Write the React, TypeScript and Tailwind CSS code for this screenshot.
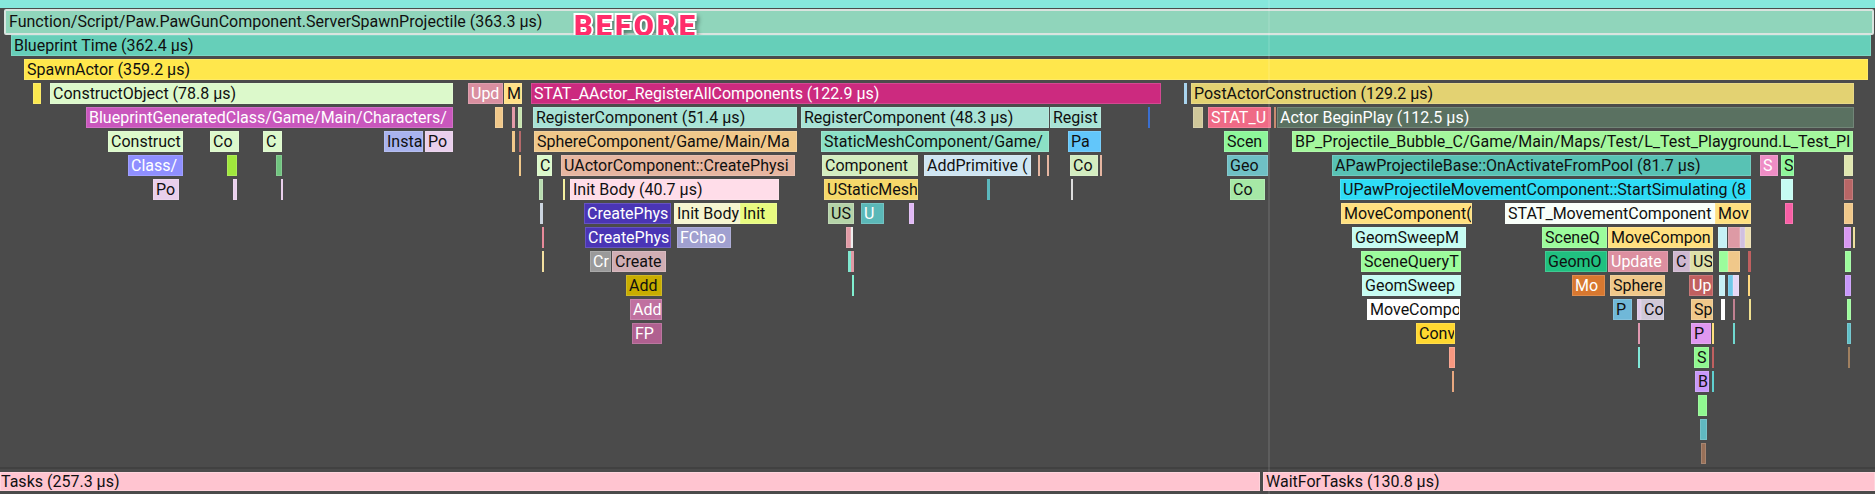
import React from "react";

type Bar = [number, number, string, string?, number?];

const R: Bar[][] = [
  [[33,41,"#fbe84f"],[50,453,"#dcf9cb","ConstructObject (78.8 µs)"],[468,503,"#d98fa0","Upd",1],[504,522,"#ffe188","M"],[531,1161,"#cc2a7f","STAT_AActor_RegisterAllComponents (122.9 µs)",1],[1184,1187,"#a9d4ee"],[1191,1854,"#e3d272","PostActorConstruction (129.2 µs)"]],
  [[86,453,"#c957bd","BlueprintGeneratedClass/Game/Main/Characters/",1],[495,503,"#f0c88a"],[512,515,"#e49aa8"],[518,522,"#c7e4ae"],[533,797,"#a8e3d6","RegisterComponent (51.4 µs)"],[801,1049,"#a8e3d6","RegisterComponent (48.3 µs)"],[1050,1101,"#a8e3d6","Regist"],[1148,1149,"#3a6fd0"],[1193,1203,"#cfc79a"],[1208,1271,"#ef6a86","STAT_U",1],[1274,1275,"#c98a70"],[1277,1854,"#5a7161","Actor BeginPlay (112.5 µs)",1]],
  [[108,183,"#dcf9cb","Construct"],[210,239,"#dcf9cb","Co"],[263,282,"#dcf9cb","C"],[384,423,"#a9b3ee","Insta"],[425,453,"#e9cfec","Po"],[512,515,"#f0c88a"],[519,521,"#b56a6a"],[534,797,"#f0c88a","SphereComponent/Game/Main/Ma"],[821,1049,"#8be0c5","StaticMeshComponent/Game/"],[1068,1101,"#62c6fa","Pa"],[1224,1268,"#8ef79a","Scen"],[1292,1853,"#a4f79d","BP_Projectile_Bubble_C/Game/Main/Maps/Test/L_Test_Playground.L_Test_Pl"]],
  [[128,183,"#8f8fff","Class/",1],[227,237,"#a0e83c"],[276,282,"#70c47f"],[519,521,"#f0c88a"],[537,552,"#dcf9cb","C"],[561,795,"#e6b6a1","UActorComponent::CreatePhysi"],[822,918,"#d3edc0","Component"],[924,1031,"#cfe5f2","AddPrimitive ("],[1038,1040,"#e6b6a1"],[1047,1049,"#e6b6a1"],[1070,1098,"#d3edc0","Co"],[1100,1101,"#e6b6a1"],[1227,1268,"#6fc0c5","Geo"],[1332,1751,"#58c2b4","APawProjectileBase::OnActivateFromPool (81.7 µs)"],[1760,1778,"#ee8dc5","S",1],[1781,1794,"#8ef79a","S"],[1844,1853,"#dfe6b0"]],
  [[153,179,"#e9cfec","Po"],[233,237,"#e9cfec"],[281,282,"#e9cfec"],[539,543,"#b8dcb0"],[563,564,"#f3f0a0"],[570,779,"#ffdde9","Init Body (40.7 µs)"],[824,918,"#f5d86a","UStaticMesh"],[987,990,"#5bb8bd"],[1071,1073,"#dddddd"],[1230,1265,"#a6e8a6","Co"],[1340,1751,"#2fdcf5","UPawProjectileMovementComponent::StartSimulating (8"],[1781,1793,"#c6fcf2"],[1844,1853,"#b86666"]],
  [[540,543,"#ccd5e0"],[584,671,"#4a35b5","CreatePhys",1],[674,740,"#f5f5d0","Init Body"],[740,777,"#e8fb80","Init"],[828,854,"#b5d3a8","US"],[861,884,"#5bb8b8","U",1],[909,914,"#e0b8f5"],[1341,1472,"#ffe080","MoveComponent("],[1505,1715,"#f8fffa","STAT_MovementComponent"],[1715,1751,"#ffe080","Mov"],[1785,1793,"#f85fa5"],[1844,1853,"#f0c88a"]],
  [[542,543,"#e88a9a"],[585,671,"#4a35b5","CreatePhys",1],[677,731,"#a0a0d0","FChao",1],[846,851,"#e09aa5"],[851,853,"#eeeeee"],[1352,1466,"#c6fcf2","GeomSweepM"],[1542,1607,"#9cfc9c","SceneQ"],[1608,1713,"#ffe080","MoveCompon"],[1718,1727,"#c6f0f5"],[1728,1740,"#dd9aa5"],[1740,1745,"#d0c0e0"],[1745,1751,"#eee0b0"],[1844,1851,"#d898f0"],[1853,1854,"#eee0a0"]],
  [[542,543,"#f3e0a0"],[590,611,"#9a9a9a","Cr",1],[612,666,"#d0aeb4","Create"],[848,851,"#80e8d0"],[851,854,"#e09aa5"],[1361,1461,"#9cfc9c","SceneQueryT"],[1545,1607,"#20c080","GeomO"],[1608,1668,"#dc8fa0","Update",1],[1673,1690,"#d0b8d0","C"],[1690,1713,"#dfe0a8","US"],[1719,1728,"#9cfc9c"],[1728,1740,"#f0c88a"],[1748,1751,"#c06060"],[1845,1851,"#9cfc9c"]],
  [[626,662,"#c8ad00","Add"],[852,854,"#80f0d0"],[1362,1461,"#c6fcf2","GeomSweep"],[1572,1605,"#d87830","Mo",1],[1610,1665,"#f0c88a","Sphere"],[1689,1713,"#c06060","Up",1],[1719,1725,"#c6f0f5"],[1728,1733,"#70c8e8"],[1733,1739,"#e6d8f5"],[1748,1749,"#ffd880"],[1845,1851,"#c898fa"]],
  [[630,662,"#c070a0","Add",1],[1367,1460,"#ffffff","MoveCompo"],[1613,1632,"#70b8d8","P"],[1637,1641,"#e0c8e8"],[1641,1664,"#d0c8d8","Co"],[1691,1713,"#f0c88a","Sp"],[1721,1725,"#ffffff"],[1733,1734,"#c08090"],[1749,1751,"#f0e090"],[1847,1851,"#9cfc9c"]],
  [[632,662,"#b06090","FP",1],[1416,1455,"#ffd830","Conv"],[1638,1640,"#e098b0"],[1691,1711,"#e098f0","P"],[1712,1713,"#ffe080"],[1733,1734,"#70d8d0"],[1847,1851,"#60c0c8"]],
  [[1449,1455,"#f89880"],[1638,1640,"#80e8d8"],[1694,1709,"#90f890","S"],[1712,1713,"#c06060"],[1848,1850,"#a08060"]],
  [[1452,1454,"#e8a880"],[1695,1709,"#c898fa","B"],[1712,1713,"#60d0d0"]],
  [[1698,1707,"#90f890"]],
  [[1700,1707,"#60b8c0"]],
  [[1701,1706,"#987058"]],
];

function Block({ b }: { b: Bar }) {
  const [a, z, color, label, white] = b;
  const wide = z - a > 3;
  return (
    <div
      className={`absolute top-0 bottom-0 overflow-hidden whitespace-nowrap pl-[2px] text-[16px] leading-[19px] ${wide ? "border border-white/15" : ""} ${white ? "text-white" : "text-[#101010]"}`}
      style={{ left: a, width: z - a, backgroundColor: color }}
    >
      {label}
    </div>
  );
}

function Row({ bars }: { bars: Bar[] }) {
  return (
    <div className="relative h-[21px] shrink-0 mb-[3px]">
      {bars.map((b, i) => (
        <Block key={i} b={b} />
      ))}
    </div>
  );
}

export default function App() {
  return (
    <div className="relative w-[1875px] h-[494px] overflow-hidden bg-[#4b4b4b] font-['Roboto',sans-serif] flex flex-col">
      <div className="h-[467px] shrink-0 flex flex-col">
        <div className="h-[8px] shrink-0 bg-[#86e8dc]" />
        <div className="relative h-[27px] shrink-0 pt-[1px] pl-[4px] pr-[1px]">
          <div className="h-[26px] overflow-hidden whitespace-nowrap rounded-[2px] border-2 border-[#d9e4df] bg-[#90d5bb] pl-[3px] text-[16px] leading-[21px] text-[#101010]">
            Function/Script/Paw.PawGunComponent.ServerSpawnProjectile (363.3 µs)
          </div>
          <div className="absolute left-[574px] top-[0px] text-[29px] leading-[36px] font-black tracking-[3px] text-[#ff2d6b] [-webkit-text-stroke:4px_white] [paint-order:stroke_fill] drop-shadow-[2px_3px_2px_rgba(0,0,0,0.4)]">
            BEFORE
          </div>
        </div>
        <Row bars={[[11, 1871, "#66cfb9", "Blueprint Time (362.4 µs)"]]} />
        <Row bars={[[24, 1868, "#ffe74c", "SpawnActor (359.2 µs)"]]} />
        {R.map((bars, i) => (
          <Row key={i} bars={bars} />
        ))}
      </div>
      <div className="h-[2px] shrink-0 bg-[#414141]" />
      <div className="mt-[3px] h-[19px] shrink-0 flex gap-[3px] text-[16px] leading-[18px] text-[#101010]">
        <div className="w-[1260px] overflow-hidden whitespace-nowrap border border-[#ffd3dc] bg-[#ffc4d0]">Tasks (257.3 µs)</div>
        <div className="flex-1 overflow-hidden whitespace-nowrap border border-[#ffd3dc] bg-[#ffc4d0] pl-[2px]">WaitForTasks (130.8 µs)</div>
      </div>
      <div className="absolute left-[1268px] top-0 bottom-0 w-[2px] bg-white/10" />
    </div>
  );
}
